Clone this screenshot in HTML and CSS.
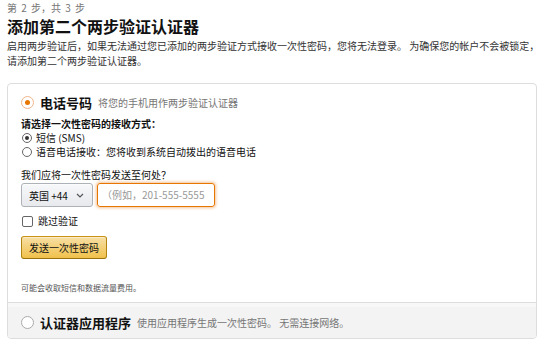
FILE: index.html
```html
<!DOCTYPE html>
<html lang="zh-CN">
<head>
    <meta charset="UTF-8">
    <meta name="viewport" content="width=device-width, initial-scale=1.0">
    <title>添加第二个两步验证认证器</title>
    <link rel="stylesheet" href="styles.css">
</head>
<body>
    <div class="page">
        <div class="step">第 2 步，共 3 步</div>
        <h1>添加第二个两步验证认证器</h1>
        <p class="desc">启用两步验证后，如果无法通过您已添加的两步验证方式接收一次性密码，您将无法登录。 为确保您的帐户不会被锁定，<br>请添加第二个两步验证认证器。</p>

        <div class="box">
            <div class="section selected">
                <div class="option">
                    <span class="radio big on"></span>
                    <span class="option-title">电话号码</span>
                    <span class="option-sub">将您的手机用作两步验证认证器</span>
                </div>
                <div class="form">
                    <div class="label bold">请选择一次性密码的接收方式：</div>
                    <label class="choice"><span class="radio on"></span>短信 (SMS)</label>
                    <label class="choice"><span class="radio"></span>语音电话接收：您将收到系统自动拨出的语音电话</label>

                    <div class="label where">我们应将一次性密码发送至何处？</div>
                    <div class="phone-row">
                        <div class="select">英国 +44
                            <svg width="8" height="5" viewBox="0 0 8 5"><path d="M1 1l3 3 3-3" fill="none" stroke="#555" stroke-width="1.2"/></svg>
                        </div>
                        <div class="input">（例如，201-555-5555</div>
                    </div>
                    <label class="choice skip"><span class="checkbox"></span>跳过验证</label>
                    <button class="btn">发送一次性密码</button>
                    <div class="fee">可能会收取短信和数据流量费用。</div>
                </div>
            </div>
            <div class="section other">
                <div class="option">
                    <span class="radio big"></span>
                    <span class="option-title">认证器应用程序</span>
                    <span class="option-sub">使用应用程序生成一次性密码。 无需连接网络。</span>
                </div>
            </div>
        </div>
    </div>
</body>
</html>
```

FILE: styles.css
```css
body {
    margin: 0;
    padding: 0;
    font-family: "Noto Sans CJK SC", "Noto Sans", sans-serif;
    color: #111;
    background-color: #fff;
}
.page {
    padding: 1px 7px 0;
}
.step {
    font-size: 10px;
    line-height: 14px;
    color: #767676;
    word-spacing: 2px;
}
h1 {
    margin: 0;
    font-size: 16px;
    line-height: 22px;
    font-weight: bold;
}
.desc {
    margin: 1px 0 0;
    font-size: 10px;
    line-height: 15px;
    color: #333;
    white-space: nowrap;
}
.box {
    margin-top: 15px;
    border: 1px solid #ddd;
    border-radius: 4px;
    overflow: hidden;
}
.section {
    padding: 0 13px;
}
.selected {
    padding-top: 9px;
    padding-bottom: 8px;
    border-bottom: 1px solid #ddd;
    box-shadow: 0 1px 3px rgba(0, 0, 0, 0.08);
}
.other {
    background-color: #f3f3f3;
    border-top: 4px solid #f8f8f8;
    padding-top: 6px;
    padding-bottom: 7px;
}
.option {
    display: flex;
    align-items: center;
    height: 18px;
}
.option-title {
    font-size: 13px;
    font-weight: bold;
    margin-left: 6px;
    color: #111;
}
.option-sub {
    font-size: 10px;
    color: #767676;
    margin-left: 6px;
}
.radio {
    display: inline-block;
    box-sizing: border-box;
    width: 10px;
    height: 10px;
    border: 1px solid #666;
    border-radius: 50%;
    background: #fff;
    margin-right: 4px;
    position: relative;
}
.radio.on::after {
    content: "";
    position: absolute;
    left: 2px;
    top: 2px;
    width: 4px;
    height: 4px;
    border-radius: 50%;
    background: #333;
}
.radio.big {
    width: 13px;
    height: 13px;
    margin-right: 0;
    border-color: #aaa;
}
.radio.big.on {
    border-color: #f0b58a;
}
.radio.big.on::after {
    left: 3px;
    top: 3px;
    width: 5px;
    height: 5px;
    background: #e77600;
}
.form {
    font-size: 10px;
    color: #111;
}
.label {
    line-height: 14px;
}
.bold {
    font-weight: bold;
    margin-top: 6px;
}
.choice {
    display: flex;
    align-items: center;
    line-height: 14px;
    margin-left: 1px;
}
.where {
    margin-top: 9px;
}
.phone-row {
    display: flex;
    gap: 4px;
    margin-top: 1px;
}
.select {
    box-sizing: border-box;
    width: 72px;
    height: 24px;
    display: flex;
    align-items: center;
    gap: 8px;
    padding-left: 7px;
    border: 1px solid #adb1b8;
    border-radius: 3px;
    background: linear-gradient(#f7f8fa, #e7e9ec);
    box-shadow: 0 1px 0 rgba(255, 255, 255, 0.6) inset;
}
.input {
    box-sizing: border-box;
    width: 118px;
    height: 24px;
    line-height: 22px;
    padding-left: 4px;
    border: 1px solid #e77600;
    border-radius: 3px;
    box-shadow: 0 0 3px 1px rgba(228, 121, 17, 0.45);
    color: #999;
    white-space: nowrap;
    overflow: hidden;
}
.skip {
    margin-top: 7px;
}
.checkbox {
    display: inline-block;
    box-sizing: border-box;
    width: 11px;
    height: 11px;
    border: 1px solid #666;
    border-radius: 2px;
    background: #fff;
    margin-right: 5px;
}
.btn {
    display: block;
    margin-top: 8px;
    box-sizing: border-box;
    width: 86px;
    height: 23px;
    padding: 0;
    font-family: inherit;
    font-size: 10px;
    color: #111;
    border: 1px solid;
    border-color: #c89411 #b0820f #99710d;
    border-radius: 3px;
    background: linear-gradient(#f7dfa5, #f0c14b);
    box-shadow: 0 1px 0 rgba(255, 255, 255, 0.4) inset;
}
.fee {
    margin-top: 23px;
    font-size: 8px;
    line-height: 12px;
    color: #555;
}
```
